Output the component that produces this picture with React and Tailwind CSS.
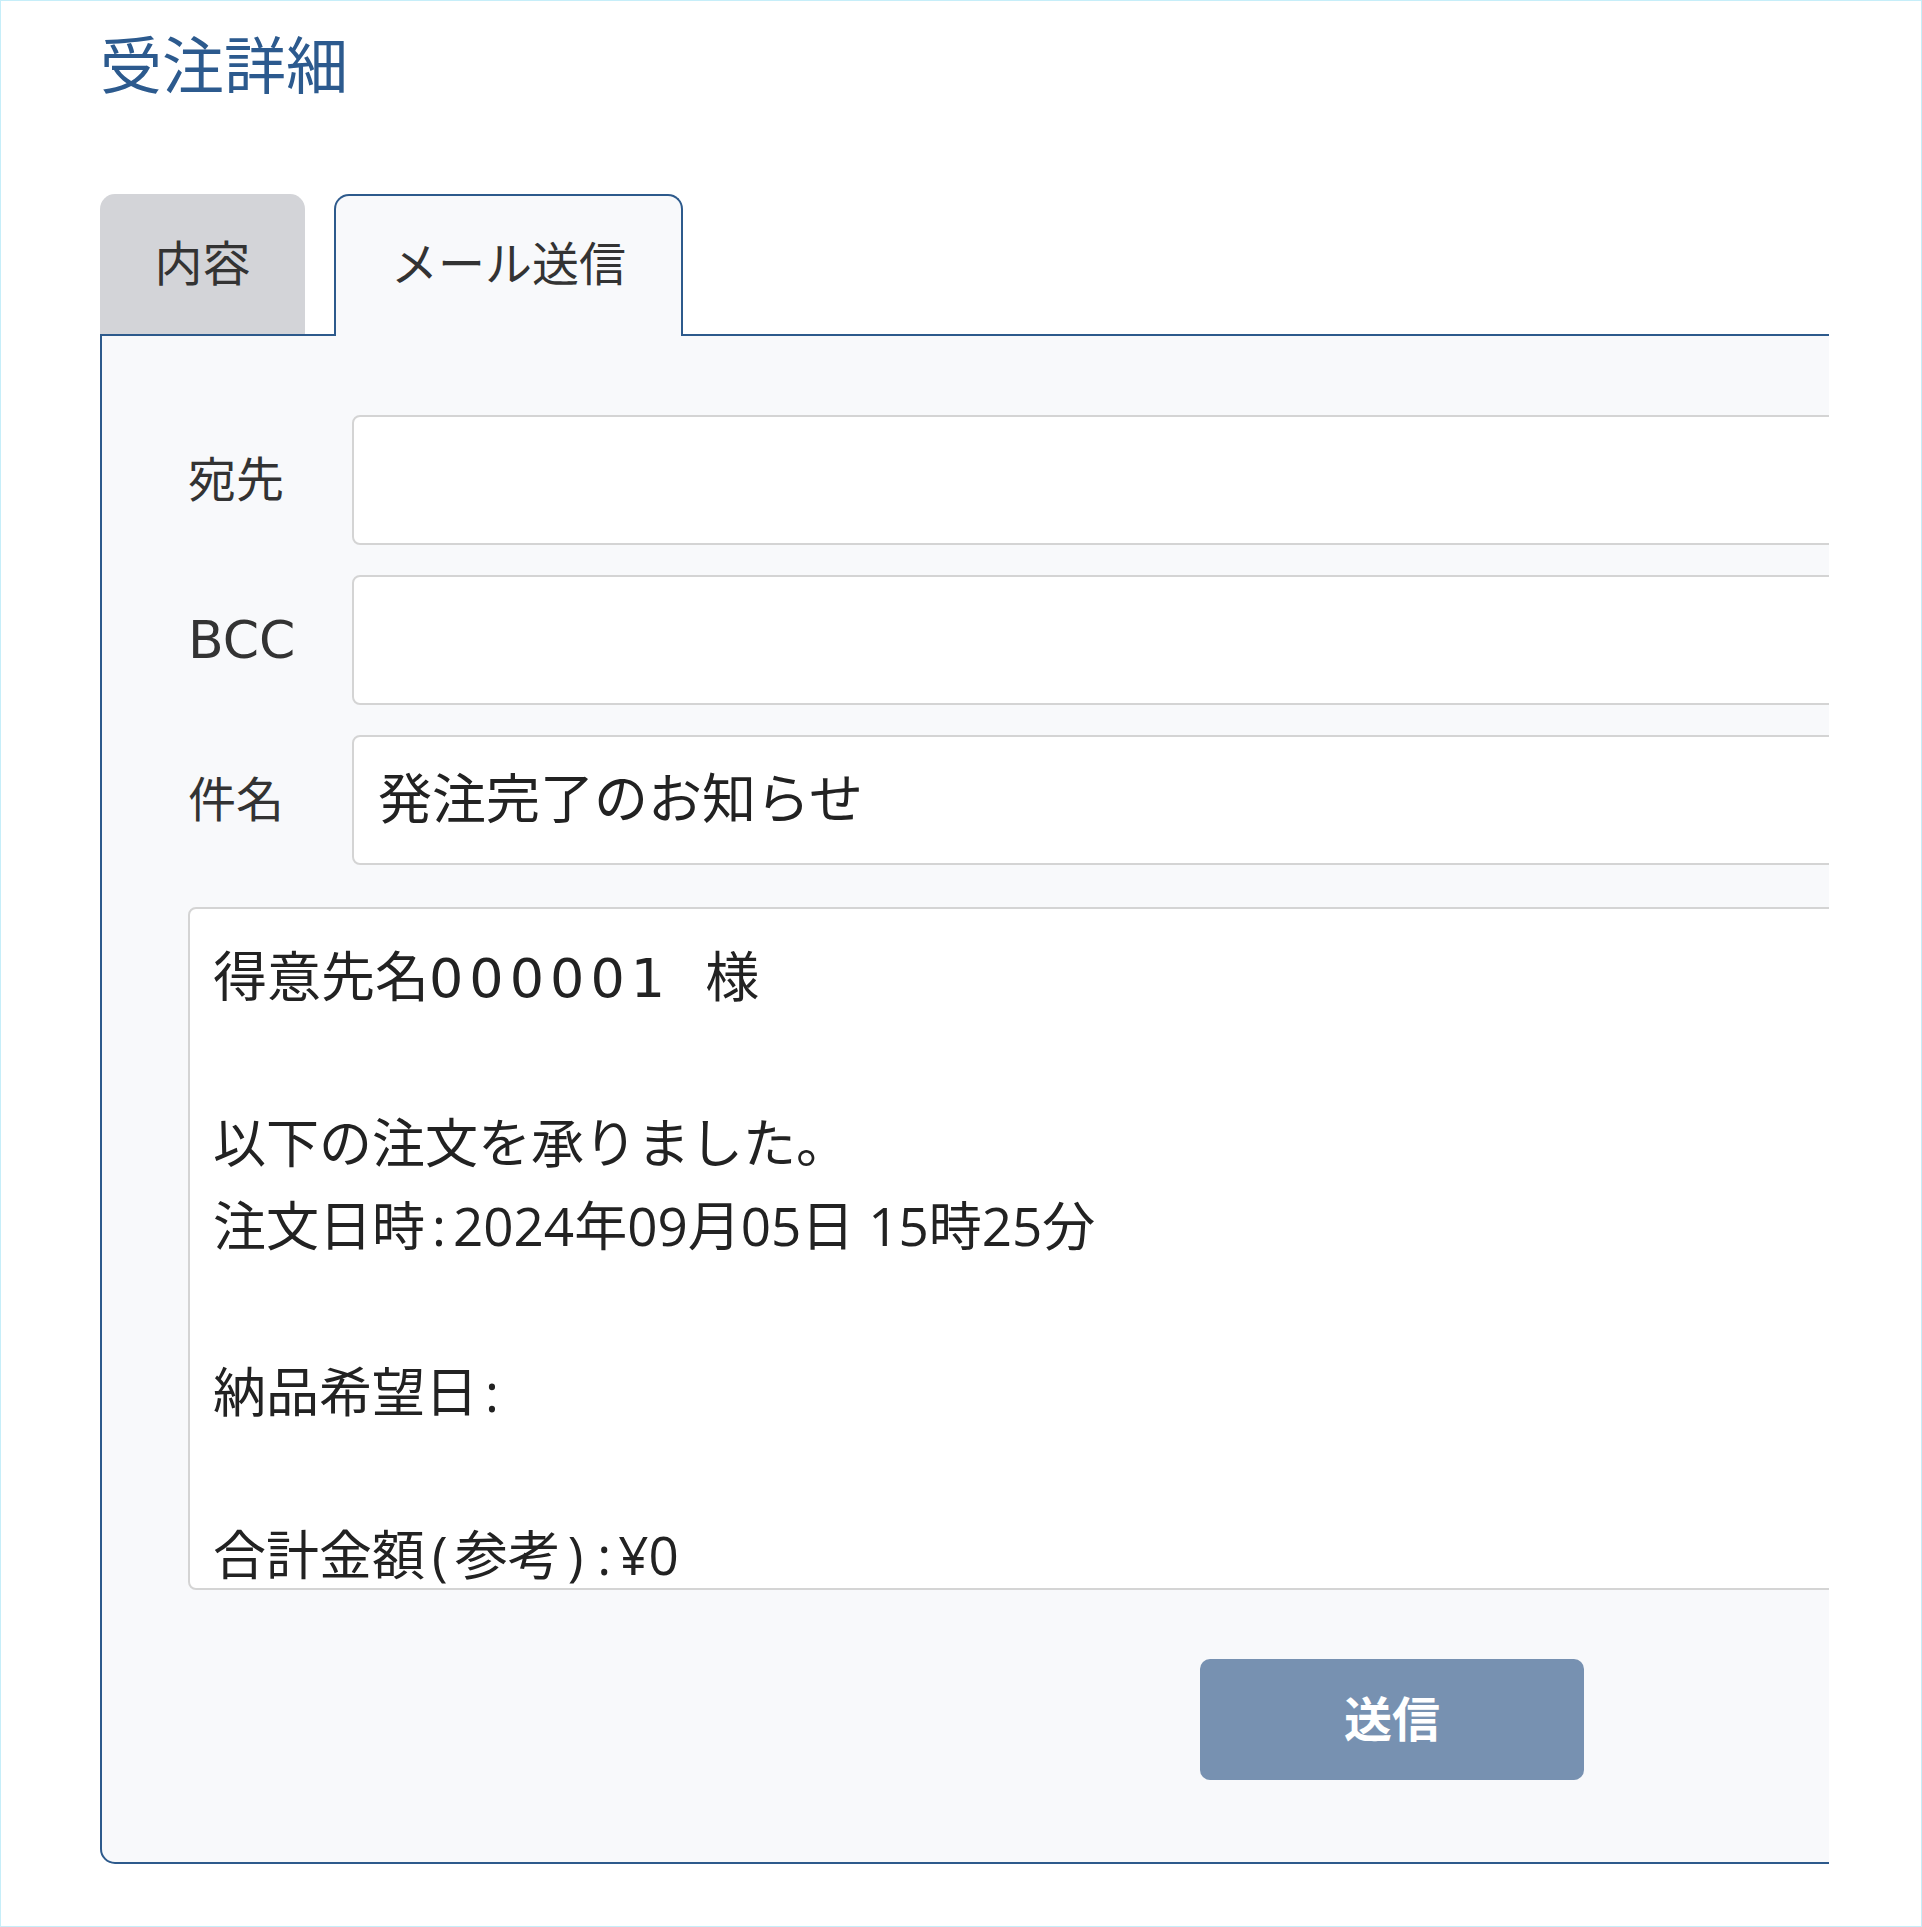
import React from "react";

function Field({ label, value, latin }) {
  return (
    <div className="flex items-center">
      <label
        className={
          latin
            ? "w-[164px] shrink-0 text-[52px] leading-none text-[#333]"
            : "w-[164px] shrink-0 text-[48px] leading-none text-[#333]"
        }
      >
        {label}
      </label>
      <div className="flex h-[130px] flex-1 items-center rounded-[8px] border-2 border-[#d4d4d4] bg-white pl-[24px] text-[54px] text-[#222]">
        {value}
      </div>
    </div>
  );
}

// narrow punctuation like the original (proportional colon / brackets)
const P = ({ children }) => <span className="px-[7px]">{children}</span>;

export default function App() {
  return (
    <div className="h-[1927px] w-full overflow-hidden border border-[#c6eef9] bg-white font-['DejaVu_Sans','Noto_Sans_CJK_JP',sans-serif]">
      <div className="pl-[99px] pt-[36px]">
        {/* Title */}
        <h1 className="h-[62px] text-[62px] leading-[62px] text-[#2c5a8e]">受注詳細</h1>

        {/* Tabs */}
        <div className="mt-[95px] flex h-[140px] items-start">
          <div className="flex h-[140px] w-[205px] items-center justify-center rounded-t-[15px] bg-[#d3d4d8] text-[48px] text-[#333]">
            内容
          </div>
          <div className="relative z-10 ml-[29px] flex h-[142px] w-[349px] items-center justify-center rounded-t-[15px] border-2 border-b-0 border-[#2d5a8c] bg-[#f8f9fb] pb-[2px] text-[47px] text-[#333]">
            メール送信
          </div>
        </div>

        {/* Panel, clipped on the right */}
        <div className="w-[1729px] overflow-hidden">
          <div className="w-[2400px] rounded-bl-[15px] border-2 border-[#2d5a8c] bg-[#f8f9fb] pb-[82px] pl-[86px] pr-[60px] pt-[79px]">
            <div className="flex flex-col gap-[30px]">
              <Field label="宛先" value="" />
              <Field label="BCC" value="" latin />
              <Field label="件名" value="発注完了のお知らせ" />
            </div>

            <div className="mt-[42px] h-[683px] overflow-hidden rounded-[8px] border-2 border-[#d4d4d4] bg-white pl-[23px] pt-[26px] font-['Open_Sans','Noto_Sans_CJK_JP',sans-serif] text-[53px] leading-[83px] text-[#222]">
              <div className="h-[83px] text-[54px]">
                得意先名
                <span className="font-['DejaVu_Sans'] tracking-[6px]">000001</span>
                <span className="ml-[34px]">様</span>
              </div>
              <div className="h-[83px]"></div>
              <div className="h-[83px]">以下の注文を承りました。</div>
              <div className="h-[83px]">
                注文日時<P>:</P>2024年09月05日 15時25分
              </div>
              <div className="h-[83px]"></div>
              <div className="h-[83px]">
                納品希望日<P>:</P>
              </div>
              <div className="h-[83px]"></div>
              <div className="mt-[7px] h-[64px] leading-[64px]">
                合計金額<P>(</P>参考<P>)</P>
                <P>:</P>¥0
              </div>
            </div>

            <div className="mt-[69px] flex">
              <button className="ml-[1012px] flex h-[121px] w-[384px] items-center justify-center rounded-[10px] bg-[#7791b1] text-[48px] font-semibold text-white">
                送信
              </button>
            </div>
          </div>
        </div>
      </div>
    </div>
  );
}
